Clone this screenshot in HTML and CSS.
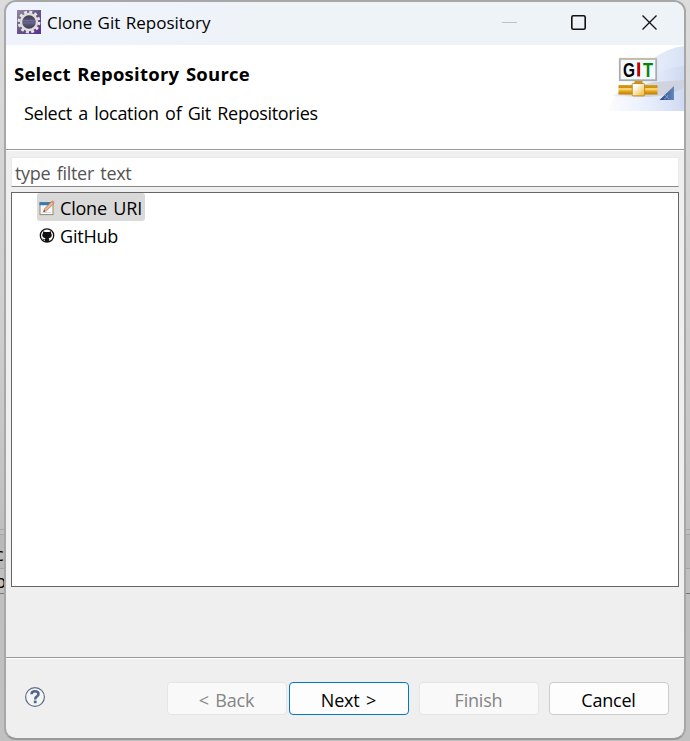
FILE: index.html
```
<!DOCTYPE html>
<html lang="en">
<head>
<meta charset="utf-8">
<title>Clone Git Repository</title>
<link rel="stylesheet" href="styles.css">
</head>
<body>
<div class="desktop">
  <div class="strip strip-left"><div class="upper"></div><div class="gap"></div><div class="tab"><span>c</span></div><div class="row"><span>p</span></div></div>
  <main class="dialog">
    <header class="titlebar">
      <svg class="app-icon" width="24" height="24" viewBox="0 0 24 24">
        <defs>
          <linearGradient id="purple" x2="1" y2="1"><stop stop-color="#9288a8"/><stop offset=".5" stop-color="#65548a"/><stop offset="1" stop-color="#5d2e96"/></linearGradient>
          <linearGradient id="globe" x2="0" y2="1"><stop stop-color="#353346"/><stop offset=".5" stop-color="#625f86"/><stop offset="1" stop-color="#3c3452"/></linearGradient>
        </defs>
        <rect width="24" height="24" fill="url(#purple)"/>
        <circle cx="12" cy="12" r="10" fill="none" stroke="#e8e5dc" stroke-width="2.8" stroke-dasharray="2.9 2.336"/>
        <circle cx="12" cy="12" r="8" fill="url(#globe)" stroke="#dfddd8" stroke-width="2.4"/>
        <path d="M5.5 10.5h13M5.5 13h13" stroke="#77739a" stroke-width=".7"/>
      </svg>
      <span class="title">Clone Git Repository</span>
      <svg class="controls" width="160" height="20" viewBox="0 0 160 20" fill="none">
        <path d="M4 10.5h15" stroke="#bcc1c5"/>
        <rect x="73.8" y="3.8" width="13.4" height="13.4" rx="1.5" stroke="#111" stroke-width="1.6"/>
        <path d="M144.5 3.5l14 14m0-14l-14 14" stroke="#111" stroke-width="1.3"/>
      </svg>
    </header>
    <section class="banner">
      <div class="heading"><h1>Select Repository Source</h1><p>Select a location of Git Repositories</p></div>
      <svg class="wizard" width="75" height="66" viewBox="0 0 75 66">
        <defs>
          <linearGradient id="sky"><stop stop-color="#fbfcff"/><stop offset="1" stop-color="#d9e2f6"/></linearGradient>
          <linearGradient id="sky2"><stop stop-color="#eef3ff" stop-opacity=".3"/><stop offset="1" stop-color="#ced9f2"/></linearGradient>
          <linearGradient id="shade"><stop stop-color="#d8d9dd" stop-opacity=".2"/><stop offset=".3" stop-color="#d4d6dc"/><stop offset="1" stop-color="#ccd2df"/></linearGradient>
          <linearGradient id="gold" x2="0" y2="1"><stop stop-color="#dca52a"/><stop offset=".25" stop-color="#c88909"/><stop offset=".4" stop-color="#ffe68b"/><stop offset=".65" stop-color="#e7a51b"/><stop offset="1" stop-color="#bd7b00"/></linearGradient>
          <linearGradient id="box" x2="1" y2="1"><stop offset=".25" stop-color="#fffefa"/><stop offset="1" stop-color="#eeb52b"/></linearGradient>
          <linearGradient id="corner" x2="1"><stop stop-color="#214888"/><stop offset="1" stop-color="#6888bd"/></linearGradient>
        </defs>
        <path d="M0 66Q2 50 20 42Q42 5 75 1V66Z" fill="url(#sky)"/>
        <path d="M27 66Q35 23 75 21V66Z" fill="url(#sky2)"/>
        <path d="M3 51Q12 44 23 43L45 37L75 35V42Q62 51 40 52Z" fill="url(#shade)"/>
        <rect x="10.8" y="13.8" width="36.4" height="21.4" fill="#f3faff" stroke="#a9abac" stroke-width="1.8"/>
        <path d="M10 13.8h38" stroke="#c4bea2" stroke-width="1.8"/>
        <text class="git-text" y="31.5"><tspan x="14" textLength="12" lengthAdjust="spacingAndGlyphs">G</tspan><tspan x="34" textLength="10" lengthAdjust="spacingAndGlyphs" fill="#078207">T</tspan></text>
        <path d="M28.2 17.5h2.9v14h-2.9Z" fill="#c80000"/>
        <rect x="25.5" y="36" width="8" height="3" fill="#cf9517"/>
        <rect x="9.5" y="40" width="39" height="9.5" fill="url(#gold)"/>
        <rect x="23.2" y="38.5" width="12.4" height="12.4" rx="1" fill="url(#box)" stroke="#c78b12"/>
        <path d="M50.5 55L65 41V55Z" fill="url(#corner)"/><path d="M55 54q3-1 4-4M56 50l4 4" stroke="#9db8dd" stroke-width=".6" fill="none"/>
      </svg>
    </section>
    <section class="body">
      <div class="filter">type filter text</div>
      <div class="tree">
        <div class="item selected">
          <svg width="16" height="16" viewBox="0 0 16 16">
            <rect x="1" y="2.6" width="13" height="12" fill="#f2faff" stroke="#a28a5b"/>
            <path d="M.5 2.2h12v3H.5Z" fill="#3879b4"/><path d="M3 12.5h9" stroke="#c7deec"/>
            <path d="M5.5 8.8L12.7 1.6l2 2L7.4 10.8l-2.7.7Z" fill="#edb78d" stroke="#b66e48" stroke-width=".7"/>
            <path d="M12 1.8L13.3.5Q15.3.8 15.5 2.5L14.2 4Z" fill="#d68d80"/><path d="M4.3 12l.8-2 1.3 1.3Z" fill="#444"/>
          </svg><span>Clone URI</span>
        </div>
        <div class="item">
          <svg width="16" height="16" viewBox="0 0 16 16">
            <circle cx="8" cy="7.5" r="6.7" fill="#fff" stroke="#111" stroke-width="1.3"/>
            <path d="M4 3.2L6 4.1Q8 3.7 10 4.1L12 3.2 12.1 5.3Q13 6.3 12.7 8 12.2 10 9.7 10.3 10.3 10.8 10.2 12V14H6V12.2Q4.5 12.6 3.8 11.3L3 10.7Q4.2 10.4 4.9 11.3 5.7 11.7 6.1 11 6.2 10.5 6.5 10.3 3.8 10 3.3 8 3 6.3 4 5.3Z" fill="#111"/>
          </svg><span>GitHub</span>
        </div>
      </div>
    </section>
    <footer class="footer">
      <svg width="22" height="22" viewBox="0 0 22 22"><circle cx="11" cy="11" r="9.4" fill="#f5f5f5" stroke="#5d7089" stroke-width="1.2"/><path d="M7.5 8.2Q7.6 5.2 11 5.2 14.5 5.2 14.5 8.1 14.5 9.6 12.7 10.7 11.2 11.5 11.2 13.4" fill="none" stroke="#52678d" stroke-width="2.6"/><rect x="9.8" y="14.6" width="2.8" height="2.6" fill="#52678d"/></svg>
      <div class="buttons"><button disabled>&lt; Back</button><button class="next">Next &gt;</button><button disabled>Finish</button><button class="cancel">Cancel</button></div>
    </footer>
  </main>
  <div class="strip"><div class="upper"></div><div class="gap"></div><div class="tab"></div><div class="row"></div></div>
</div>
</body>
</html>
```
FILE: styles.css
```
* { box-sizing: border-box; }
body { margin: 0; font: 375 18px/24px "Open Sans", "Noto Sans", sans-serif; letter-spacing: -.3px; word-spacing: 2px; color: #000; overflow: hidden; }
.desktop { display: flex; width: 690px; height: 741px; background: linear-gradient(#dcdcdc, #cecece 45%, #bfbfbf 72%, #c1c1c1); }
.strip { width: 4px; flex: none; overflow: hidden; }
.strip-left { width: 5px; margin-right: -1px; }
.upper { height: 530px; border-bottom: 1px solid #a6a6a6; }
.gap { height: 5px; border-bottom: 1px solid #a6a6a6; }
.tab { height: 34px; border-bottom: 1px solid #a4a4a4; background: #b8b8b8; padding-top: 7px; }
.row { height: 25px; border-bottom: 1px solid #777; }
.strip span { display: block; margin-left: -5px; }
.dialog { width: 682px; height: 740px; flex: none; border: 2px solid #a7a7a7; border-bottom-color: #999; border-radius: 12px; overflow: hidden; background: #efefef; display: flex; flex-direction: column; }
.titlebar { height: 43px; flex: none; display: flex; align-items: center; padding: 0 26px 3px 11px; background: linear-gradient(90deg, #eff3fc, #eef3f7 50%); }
.title { margin: 1px 0 0 6px; font-size: 17px; letter-spacing: 0; word-spacing: 1px; }
.controls { margin-left: auto; }
.banner { height: 105px; flex: none; display: flex; justify-content: space-between; background: #fff; border-bottom: 1px solid #999; }
.heading { padding: 17px 0 0 8px; }
h1 { margin: 0; font-size: 18.5px; line-height: 24px; font-weight: 700; letter-spacing: .25px; word-spacing: 1.5px; white-space: nowrap; }
p { margin: 15px 0 0 10px; white-space: nowrap; }
.body { height: 507px; flex: none; padding: 6px 5px 0; border-top: 1px solid #fff; }
.filter { height: 30px; padding: 3px 3px 0; background: #fff; border: 1px solid #e9e9e9; border-bottom-color: #888; color: #555; }
.tree { height: 395px; margin-top: 5px; border: 1px solid #666; background: #fff; padding-left: 25px; }
.item { height: 28px; width: 108px; display: flex; align-items: center; padding: 2px 2px 0; border-radius: 3px; }
.item span { margin-left: 5px; white-space: nowrap; letter-spacing: -.2px; }
.item svg { margin-top: -1px; }
.selected { background: #d9d9d9; }
.footer { flex: 1; border-top: 1px solid #999; box-shadow: inset 0 1px #fff; display: flex; justify-content: space-between; padding: 24px 15px 0 18px; }
.footer > svg { margin-top: 4px; }
.buttons { display: flex; }
button { width: 120px; height: 33px; border: 1px solid #e5e5e5; border-radius: 4px; padding: 3px 1px 0 0; background: #f9f9f9; font: inherit; letter-spacing: -.2px; word-spacing: 2px; color: #000; }
button:disabled { color: #858585; }
button.next { margin: 0 10px 0 2px; border-color: #0077c8; background: #fdfdfd; }
button.cancel { margin-left: 10px; border-color: #ccc; background: #fdfdfd; }
.git-text { font: bold 20px "Liberation Sans", sans-serif; letter-spacing: 0; }
```
